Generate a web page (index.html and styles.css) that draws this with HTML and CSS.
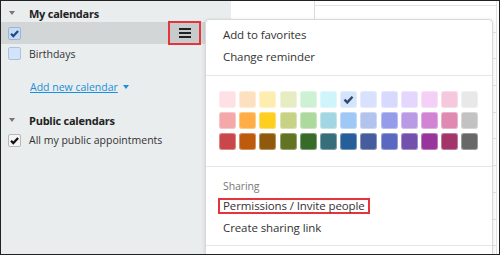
FILE: index.html
```html
<!DOCTYPE html>
<html lang="en">
<head>
  <meta charset="UTF-8">
  <title>Calendar options</title>
  <link rel="stylesheet" href="styles.css">
</head>
<body>

<div class="app">
  <aside class="sidebar">
    <div class="group-head"><span class="caret"></span>My calendars</div>
    <div class="cal-row selected">
      <span class="check blue checked">
        <svg viewBox="0 0 13 13" width="13" height="13"><path d="M3 6.8l2.3 2.3 4.8-5" fill="none" stroke="#1f4c86" stroke-width="2.2"/></svg>
      </span>
      <span class="name"></span>
      <span class="menu-btn">
        <svg viewBox="0 0 12 10" width="12" height="10"><path d="M0 1h12M0 5h12M0 9h12" stroke="#222" stroke-width="1.8"/></svg>
      </span>
    </div>
    <div class="cal-row">
      <span class="check blue"></span>
      <span class="name">Birthdays</span>
    </div>
    <div class="add-row"><a class="add-link">Add new calendar</a><span class="caret link-caret"></span></div>
    <div class="group-head public"><span class="caret"></span>Public calendars</div>
    <div class="cal-row public-row">
      <span class="check plain checked">
        <svg viewBox="0 0 13 13" width="13" height="13"><path d="M3 6.8l2.3 2.3 4.8-5" fill="none" stroke="#111" stroke-width="2.2"/></svg>
      </span>
      <span class="name">All my public appointments</span>
    </div>
  </aside>

  <main class="week">
    <div class="col-a"></div>
    <div class="col-b">
      <div class="slot"></div><div class="slot"></div><div class="slot"></div>
      <div class="slot"></div><div class="slot"></div><div class="slot"></div>
      <div class="slot"></div><div class="slot"></div><div class="slot"></div>
      <div class="slot"></div>
    </div>
  </main>

  <div class="popup">
    <div class="menu-part">
      <div class="item">Add to favorites</div>
      <div class="item">Change reminder</div>
    </div>
    <div class="swatch-part">
      <div class="swatches">
        <span style="background:#fde1e4"></span>
        <span style="background:#fde0bf"></span>
        <span style="background:#fdedae"></span>
        <span style="background:#e6edc2"></span>
        <span style="background:#cdf1d3"></span>
        <span style="background:#cff4fb"></span>
        <span class="on" style="background:#d3e4fd">
          <svg viewBox="0 0 17 17" width="17" height="17"><path d="M4.5 8.6l2.8 2.8 5.2-5.6" fill="none" stroke="#36476a" stroke-width="2.4"/></svg>
        </span>
        <span style="background:#d8e1fd"></span>
        <span style="background:#d7dafc"></span>
        <span style="background:#e4d6fc"></span>
        <span style="background:#f4d0f6"></span>
        <span style="background:#f6c8dd"></span>
        <span style="background:#e8e8e8"></span>

        <span style="background:#f4a8aa"></span>
        <span style="background:#feae45"></span>
        <span style="background:#fecf1e"></span>
        <span style="background:#c8d285"></span>
        <span style="background:#acd99d"></span>
        <span style="background:#a2d6e2"></span>
        <span style="background:#9fc8f7"></span>
        <span style="background:#b2c4ee"></span>
        <span style="background:#959deb"></span>
        <span style="background:#b99be5"></span>
        <span style="background:#d283d3"></span>
        <span style="background:#e089b1"></span>
        <span style="background:#c2c2c2"></span>

        <span style="background:#c9474b"></span>
        <span style="background:#bd5a0b"></span>
        <span style="background:#8f5a0b"></span>
        <span style="background:#617424"></span>
        <span style="background:#366b29"></span>
        <span style="background:#366f79"></span>
        <span style="background:#265e9a"></span>
        <span style="background:#455d9d"></span>
        <span style="background:#5b68c1"></span>
        <span style="background:#7350ac"></span>
        <span style="background:#98359d"></span>
        <span style="background:#a23569"></span>
        <span style="background:#686868"></span>
      </div>
    </div>
    <div class="menu-part sharing">
      <div class="section-title">Sharing</div>
      <div class="item"><span class="marked">Permissions / Invite people</span></div>
      <div class="item">Create sharing link</div>
    </div>
    <div class="menu-part rest"></div>
  </div>
</div>

</body>
</html>
```

FILE: styles.css
```css
*{
  box-sizing: border-box;
}

body{
  margin: 0;
  font-family: "Open Sans", "Noto Sans", sans-serif;
  color: #333;
}

.app{
  position: relative;
  display: flex;
  width: 500px;
  height: 255px;
  border: 1px solid #222;
  overflow: hidden;
  background: #fff;
}

/* left panel */
.sidebar{
  width: 230px;
  flex: none;
  background: #e9eded;
  padding-top: 3px;
  font-size: 10.5px;
}

.group-head{
  display: flex;
  align-items: center;
  height: 18px;
  padding-left: 8px;
  font-weight: bold;
  font-size: 11px;
  letter-spacing: -0.25px;
  color: #222;
}

.group-head .caret{
  margin-right: 14px;
}

.caret{
  width: 0;
  height: 0;
  border-left: 3.5px solid transparent;
  border-right: 3.5px solid transparent;
  border-top: 4px solid #777;
}

.cal-row{
  display: flex;
  align-items: center;
  height: 19px;
  padding-left: 7px;
}

.cal-row.selected{
  height: 22px;
  background: #d3d6d6;
}

.check{
  width: 13px;
  height: 13px;
  flex: none;
  border-radius: 2px;
  margin-right: 8px;
  display: flex;
}

.check.blue{
  background: #d3e3f8;
  border: 1px solid #a9c2e2;
}

.check.blue.checked{
  background: #c8dbf4;
  border-color: #9bb6da;
}

.check.plain{
  background: #f4f4f4;
  border: 1px solid #b8b8b8;
}

.check svg{
  margin: -1px;
}

.name{
  flex: 1;
  white-space: nowrap;
}

.menu-btn{
  width: 33px;
  height: 24px;
  flex: none;
  margin-right: 30px;
  border: 2px solid #e5343c;
  background: #c8cbcb;
  display: flex;
  align-items: center;
  justify-content: center;
}

.add-row{
  display: flex;
  align-items: center;
  height: 20px;
  margin-top: 14px;
  padding-left: 29px;
}

.add-link{
  color: #1b8fdc;
  text-decoration: underline;
}

.link-caret{
  margin-left: 5px;
  border-top-color: #1b8fdc;
}

.group-head.public{
  margin-top: 14px;
}

.public-row{
  height: 20px;
  margin-top: 1px;
}

/* calendar grid behind the menu */
.week{
  flex: 1;
  display: flex;
}

.col-a{
  width: 84px;
  border-right: 1px solid #dcdcdc;
}

.col-b{
  flex: 1;
  padding-top: 4px;
  border-right: 1px solid #e2e2e2;
  margin-right: 2px;
}

.slot{
  height: 26.7px;
  border-top: 1px solid #e3e3e3;
}

/* context menu */
.popup{
  position: absolute;
  left: 204px;
  top: 18px;
  width: 288px;
  height: 260px;
  background: #fff;
  border: 1px solid #d8d8d8;
  border-radius: 4px;
  box-shadow: 0 1px 4px rgba(0, 0, 0, 0.12);
  font-size: 11.5px;
  letter-spacing: -0.1px;
}

.menu-part{
  padding: 4px 0 7px 17px;
}

.item{
  height: 22px;
  line-height: 22px;
  white-space: nowrap;
}

.swatch-part{
  border-top: 1px solid #e6e6e6;
  padding: 15px 0 16px 13px;
}

.swatches{
  display: grid;
  grid-template-columns: repeat(13, 17px);
  grid-auto-rows: 17px;
  column-gap: 3.2px;
  row-gap: 4px;
}

.swatches span{
  border-radius: 3px;
  box-shadow: inset 0 0 0 1px rgba(255, 255, 255, 0.35);
}

.sharing{
  border-top: 1px solid #e6e6e6;
  padding-top: 10px;
  padding-bottom: 6px;
}

.section-title{
  height: 18px;
  line-height: 18px;
  font-size: 10.5px;
  color: #777;
}

.marked{
  display: inline-block;
  line-height: 12px;
  padding: 0 3px;
  margin-left: -5px;
  border: 2px solid #e5343c;
}

.rest{
  border-top: 1px solid #e6e6e6;
}
```
